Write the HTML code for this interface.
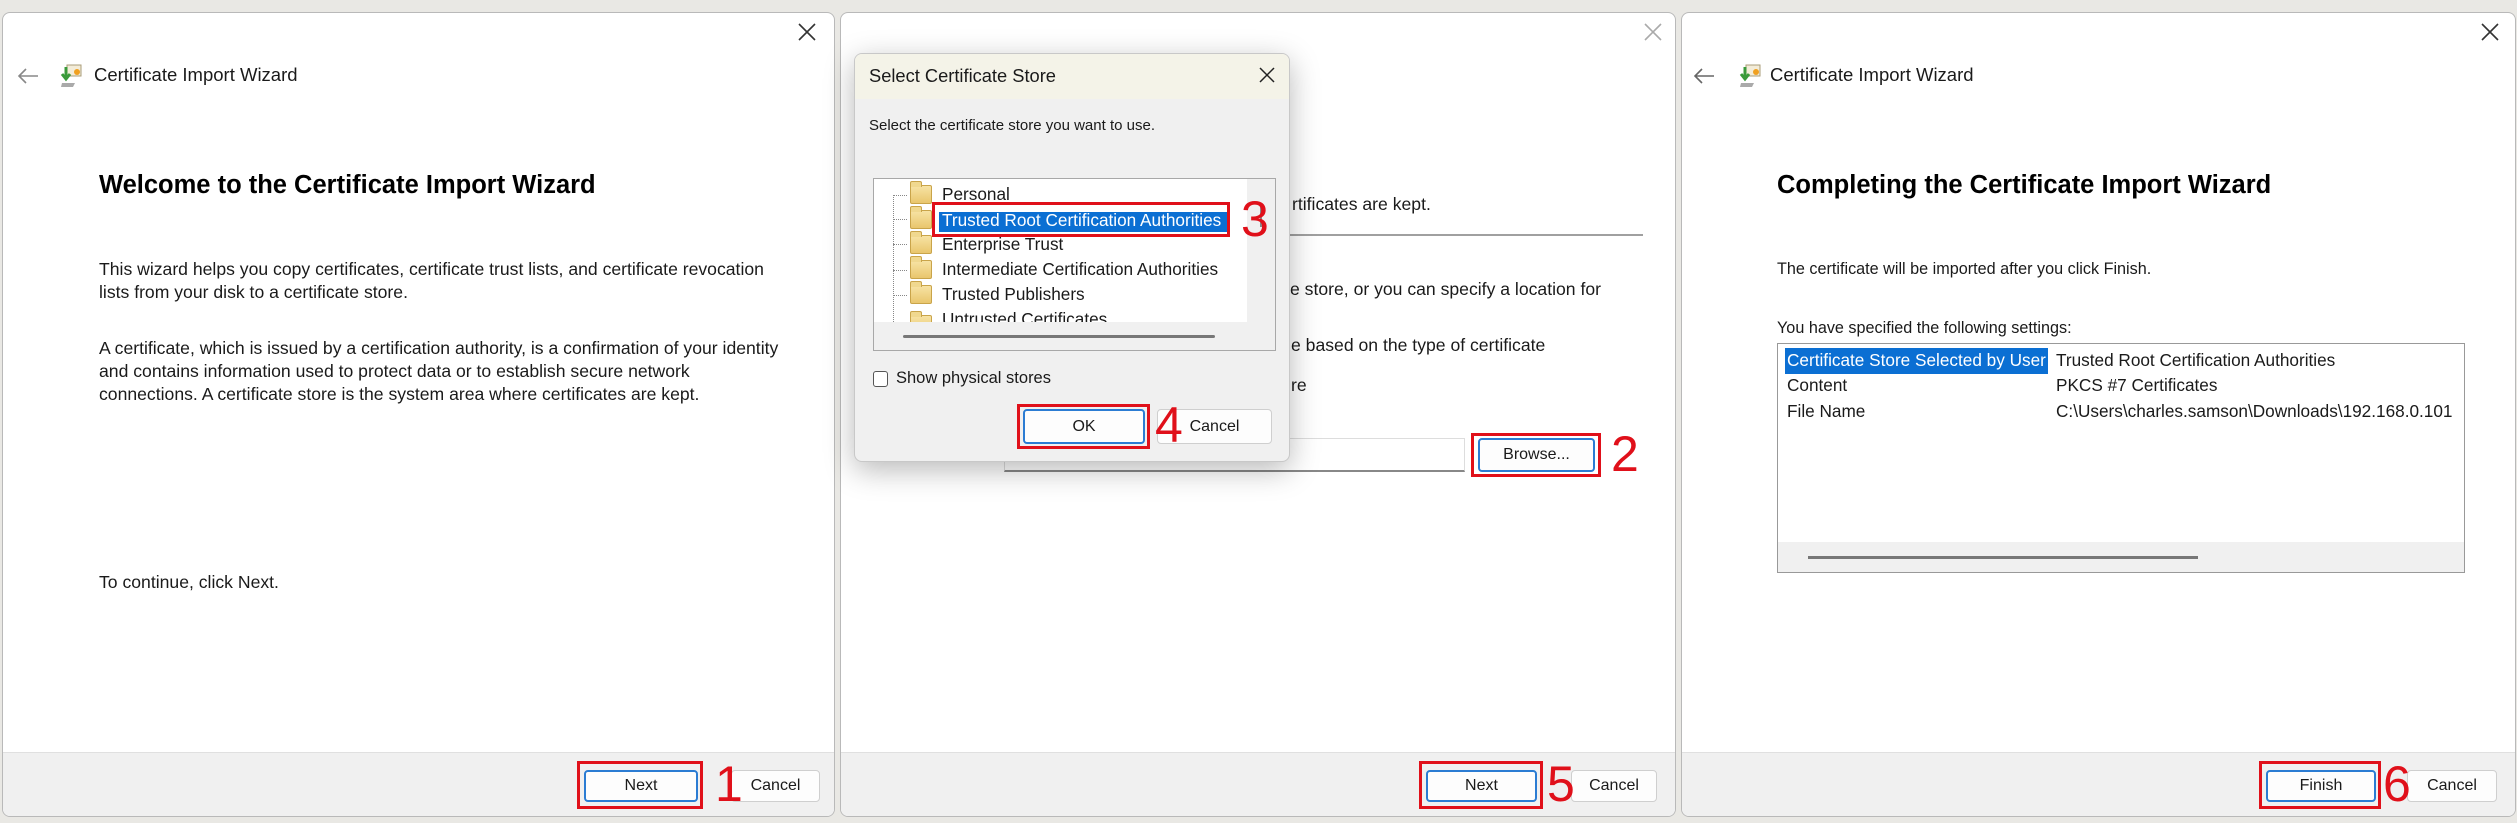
<!DOCTYPE html>
<html><head><meta charset="utf-8"><style>
*{box-sizing:border-box;margin:0;padding:0}
body{width:2517px;height:823px;background:#e9e8e4;position:relative;overflow:hidden;font-family:"Liberation Sans",sans-serif;color:#1a1a1a}
.a{position:absolute;white-space:nowrap}
.panel{position:absolute;top:12px;height:805px;background:#fff;border:1px solid #b9b9b9;border-radius:8px;overflow:hidden}
.foot{position:absolute;left:0;right:0;bottom:0;height:64px;background:#f0f0f0;border-top:1px solid #e0e0e0}
.t{font-size:17.6px;line-height:23px}
.t3{font-size:16.2px;line-height:23px}
.h{font-size:25.5px;font-weight:bold;color:#000}
.ttl{font-size:18.5px}
.btn{position:absolute;background:#fdfdfd;border:1px solid #cfcfcf;border-radius:4px;font-size:16px;text-align:center;color:#1a1a1a}
.pri{border:2px solid #2b7cd3}
.red{position:absolute;border:3px solid #e0101a}
.num{position:absolute;color:#e0101a;font-size:50px;line-height:50px}
.fold{position:absolute;width:22px;height:19px;background:linear-gradient(#f7e3a4,#e9c66d);border:1px solid #c9a44a;border-radius:2px}
.fold:before{content:"";position:absolute;left:-1px;top:-5px;width:10px;height:5px;background:#f0d88f;border:1px solid #c9a44a;border-bottom:none;border-radius:2px 2px 0 0}
.ti{font-size:17.2px}
</style></head><body>

<!-- Panel 1 -->
<div class="panel" style="left:2px;width:833px">
  <svg class="a" style="left:793px;top:8px" width="22" height="22" viewBox="0 0 22 22"><path d="M3 3L19 19M19 3L3 19" stroke="#333" stroke-width="1.6"/></svg>
  <svg class="a" style="left:14px;top:55px" width="22" height="16" viewBox="0 0 22 16"><path d="M21 8H2M9 1L2 8L9 15" stroke="#888" stroke-width="1.6" fill="none"/></svg>
  <svg class="a" style="left:55px;top:50px" width="26" height="26" viewBox="0 0 26 26"><rect x="9" y="2" width="14" height="11" fill="#f3ecd8" stroke="#a99c78"/><circle cx="19" cy="9" r="3" fill="#f0a020"/><path d="M4 20h13l-2 4H3z" fill="#aaa"/><path d="M8 4v11M4 11l4 5 4-5" stroke="#3a9a3a" stroke-width="3" fill="none"/></svg>
  <div class="a ttl" style="left:91px;top:51px">Certificate Import Wizard</div>
  <div class="a h" style="left:96px;top:158px">Welcome to the Certificate Import Wizard</div>
  <div class="a t" style="left:96px;top:245px">This wizard helps you copy certificates, certificate trust lists, and certificate revocation<br>lists from your disk to a certificate store.</div>
  <div class="a t" style="left:96px;top:324px">A certificate, which is issued by a certification authority, is a confirmation of your identity<br>and contains information used to protect data or to establish secure network<br>connections. A certificate store is the system area where certificates are kept.</div>
  <div class="a t" style="left:96px;top:558px">To continue, click Next.</div>
  <div class="foot">
    <div class="btn pri" style="left:581px;top:17px;width:114px;height:32px;line-height:28px">Next</div>
    <div class="red" style="left:574px;top:8px;width:126px;height:48px"></div>
    <div class="btn" style="left:728px;top:17px;width:89px;height:32px;line-height:30px">Cancel</div>
    <div class="num" style="left:712px;top:6px">1</div>
  </div>
</div>

<!-- Panel 2 -->
<div class="panel" style="left:840px;width:836px">
  <svg class="a" style="left:801px;top:8px" width="22" height="22" viewBox="0 0 22 22"><path d="M3 3L19 19M19 3L3 19" stroke="#aaa" stroke-width="1.6"/></svg>
  <div class="a t" style="left:451px;top:180px">rtificates are kept.</div>
  <div style="position:absolute;left:444px;top:221px;width:358px;height:2px;background:#a0a0a0"></div>
  <div class="a t" style="left:449px;top:265px">e store, or you can specify a location for</div>
  <div class="a t" style="left:450px;top:321px">e based on the type of certificate</div>
  <div class="a t" style="left:450px;top:361px">re</div>
  <div style="position:absolute;left:163px;top:425px;width:461px;height:34px;border:1px solid #ddd;border-bottom:2px solid #888;background:#fff"></div>
  <div class="btn pri" style="left:637px;top:425px;width:117px;height:34px;line-height:30px">Browse...</div>
  <div class="red" style="left:630px;top:420px;width:130px;height:44px"></div>
  <div class="num" style="left:770px;top:416px">2</div>
  <div class="foot">
    <div class="btn pri" style="left:585px;top:17px;width:111px;height:32px;line-height:28px">Next</div>
    <div class="red" style="left:578px;top:8px;width:124px;height:48px"></div>
    <div class="btn" style="left:730px;top:17px;width:86px;height:32px;line-height:30px">Cancel</div>
    <div class="num" style="left:706px;top:6px">5</div>
  </div>
</div>

<!-- Select Certificate Store dialog -->
<div style="position:absolute;left:854px;top:53px;width:436px;height:409px;background:#f0f0f0;border:1px solid #c8c8c8;border-radius:8px;box-shadow:0 8px 30px rgba(0,0,0,.28);overflow:hidden">
  <div style="position:absolute;left:0;top:0;right:0;height:45px;background:#f4f3e8"></div>
  <div class="a" style="left:14px;top:11px;font-size:18.3px">Select Certificate Store</div>
  <svg class="a" style="left:402px;top:11px" width="20" height="20" viewBox="0 0 20 20"><path d="M3 3L17 17M17 3L3 17" stroke="#222" stroke-width="1.5"/></svg>
  <div class="a" style="left:14px;top:63px;font-size:15px">Select the certificate store you want to use.</div>
  <div style="position:absolute;left:18px;top:124px;width:403px;height:173px;border:1px solid #a8a8a8;background:#f0f0f0">
    <div style="position:absolute;left:0;top:0;width:373px;height:143px;background:#fff"></div>
    <div style="position:absolute;left:19px;top:16px;height:127px;border-left:1px dotted #888"></div>
    <div style="position:absolute;left:19px;top:16px;width:14px;border-top:1px dotted #888"></div>
    <div style="position:absolute;left:19px;top:40px;width:14px;border-top:1px dotted #888"></div>
    <div style="position:absolute;left:19px;top:65px;width:14px;border-top:1px dotted #888"></div>
    <div style="position:absolute;left:19px;top:91px;width:14px;border-top:1px dotted #888"></div>
    <div style="position:absolute;left:19px;top:116px;width:14px;border-top:1px dotted #888"></div>
    <div class="fold" style="left:36px;top:6px"></div>
    <div class="fold" style="left:36px;top:31px"></div>
    <div class="fold" style="left:36px;top:56px"></div>
    <div class="fold" style="left:36px;top:81px"></div>
    <div class="fold" style="left:36px;top:106px"></div>
    <div style="position:absolute;left:36px;top:131px;width:22px;height:12px;overflow:hidden"><div class="fold" style="left:0;top:5px"></div></div>
    <div class="a ti" style="left:68px;top:5px">Personal</div>
    <div class="a" style="left:65px;top:33px;width:289px;height:20px;background:#0b6fd3"></div>
    <div class="a ti" style="left:68px;top:31px;color:#fff">Trusted Root Certification Authorities</div>
    <div class="a ti" style="left:68px;top:55px">Enterprise Trust</div>
    <div class="a ti" style="left:68px;top:80px">Intermediate Certification Authorities</div>
    <div class="a ti" style="left:68px;top:105px">Trusted Publishers</div>
    <div class="ti" style="position:absolute;left:68px;top:130px;height:13px;overflow:hidden;white-space:nowrap">Untrusted Certificates</div>
    <div style="position:absolute;left:386px;top:26px;width:2px;height:22px;background:#888"></div>
    <div style="position:absolute;left:29px;top:156px;width:312px;height:3px;background:#777;border-radius:2px"></div>
  </div>
  <div class="red" style="left:77px;top:148px;width:298px;height:35px"></div>
  <div class="num" style="left:386px;top:140px">3</div>
  <div style="position:absolute;left:18px;top:317px;width:15px;height:16px;border:1px solid #555;border-radius:3px;background:#fff"></div>
  <div class="a" style="left:41px;top:315px;font-size:16.5px">Show physical stores</div>
  <div class="btn pri" style="left:168px;top:355px;width:122px;height:35px;line-height:31px">OK</div>
  <div class="red" style="left:162px;top:350px;width:133px;height:45px"></div>
  <div class="btn" style="left:302px;top:355px;width:115px;height:35px;line-height:33px">Cancel</div>
  <div class="num" style="left:300px;top:346px">4</div>
</div>

<!-- Panel 3 -->
<div class="panel" style="left:1681px;width:835px">
  <svg class="a" style="left:797px;top:8px" width="22" height="22" viewBox="0 0 22 22"><path d="M3 3L19 19M19 3L3 19" stroke="#333" stroke-width="1.6"/></svg>
  <svg class="a" style="left:11px;top:55px" width="22" height="16" viewBox="0 0 22 16"><path d="M21 8H2M9 1L2 8L9 15" stroke="#666" stroke-width="1.6" fill="none"/></svg>
  <svg class="a" style="left:55px;top:50px" width="26" height="26" viewBox="0 0 26 26"><rect x="9" y="2" width="14" height="11" fill="#f3ecd8" stroke="#a99c78"/><circle cx="19" cy="9" r="3" fill="#f0a020"/><path d="M4 20h13l-2 4H3z" fill="#aaa"/><path d="M8 4v11M4 11l4 5 4-5" stroke="#3a9a3a" stroke-width="3" fill="none"/></svg>
  <div class="a ttl" style="left:88px;top:51px">Certificate Import Wizard</div>
  <div class="a h" style="left:95px;top:158px">Completing the Certificate Import Wizard</div>
  <div class="a t3" style="left:95px;top:245px">The certificate will be imported after you click Finish.</div>
  <div class="a t3" style="left:95px;top:304px">You have specified the following settings:</div>
  <div style="position:absolute;left:95px;top:330px;width:688px;height:230px;border:1px solid #999;background:#fff">
    <div style="position:absolute;left:0;right:0;bottom:0;height:30px;background:#f0f0f0"></div>
    <div style="position:absolute;left:30px;bottom:13px;width:390px;height:3px;background:#777"></div>
    <div class="a" style="left:7px;top:4px;width:263px;height:26px;background:#0b6fd3"></div>
    <div class="a ti" style="left:9px;top:6px;color:#fff">Certificate Store Selected by User</div>
    <div class="a ti" style="left:278px;top:6px">Trusted Root Certification Authorities</div>
    <div class="a ti" style="left:9px;top:31px">Content</div>
    <div class="a ti" style="left:278px;top:31px">PKCS #7 Certificates</div>
    <div class="a ti" style="left:9px;top:57px">File Name</div>
    <div class="a ti" style="left:278px;top:57px">C:\Users\charles.samson\Downloads\192.168.0.101</div>
  </div>
  <div class="foot">
    <div class="btn pri" style="left:584px;top:17px;width:110px;height:32px;line-height:28px">Finish</div>
    <div class="red" style="left:577px;top:8px;width:122px;height:48px"></div>
    <div class="btn" style="left:725px;top:17px;width:90px;height:32px;line-height:30px">Cancel</div>
    <div class="num" style="left:701px;top:6px">6</div>
  </div>
</div>
</body></html>
